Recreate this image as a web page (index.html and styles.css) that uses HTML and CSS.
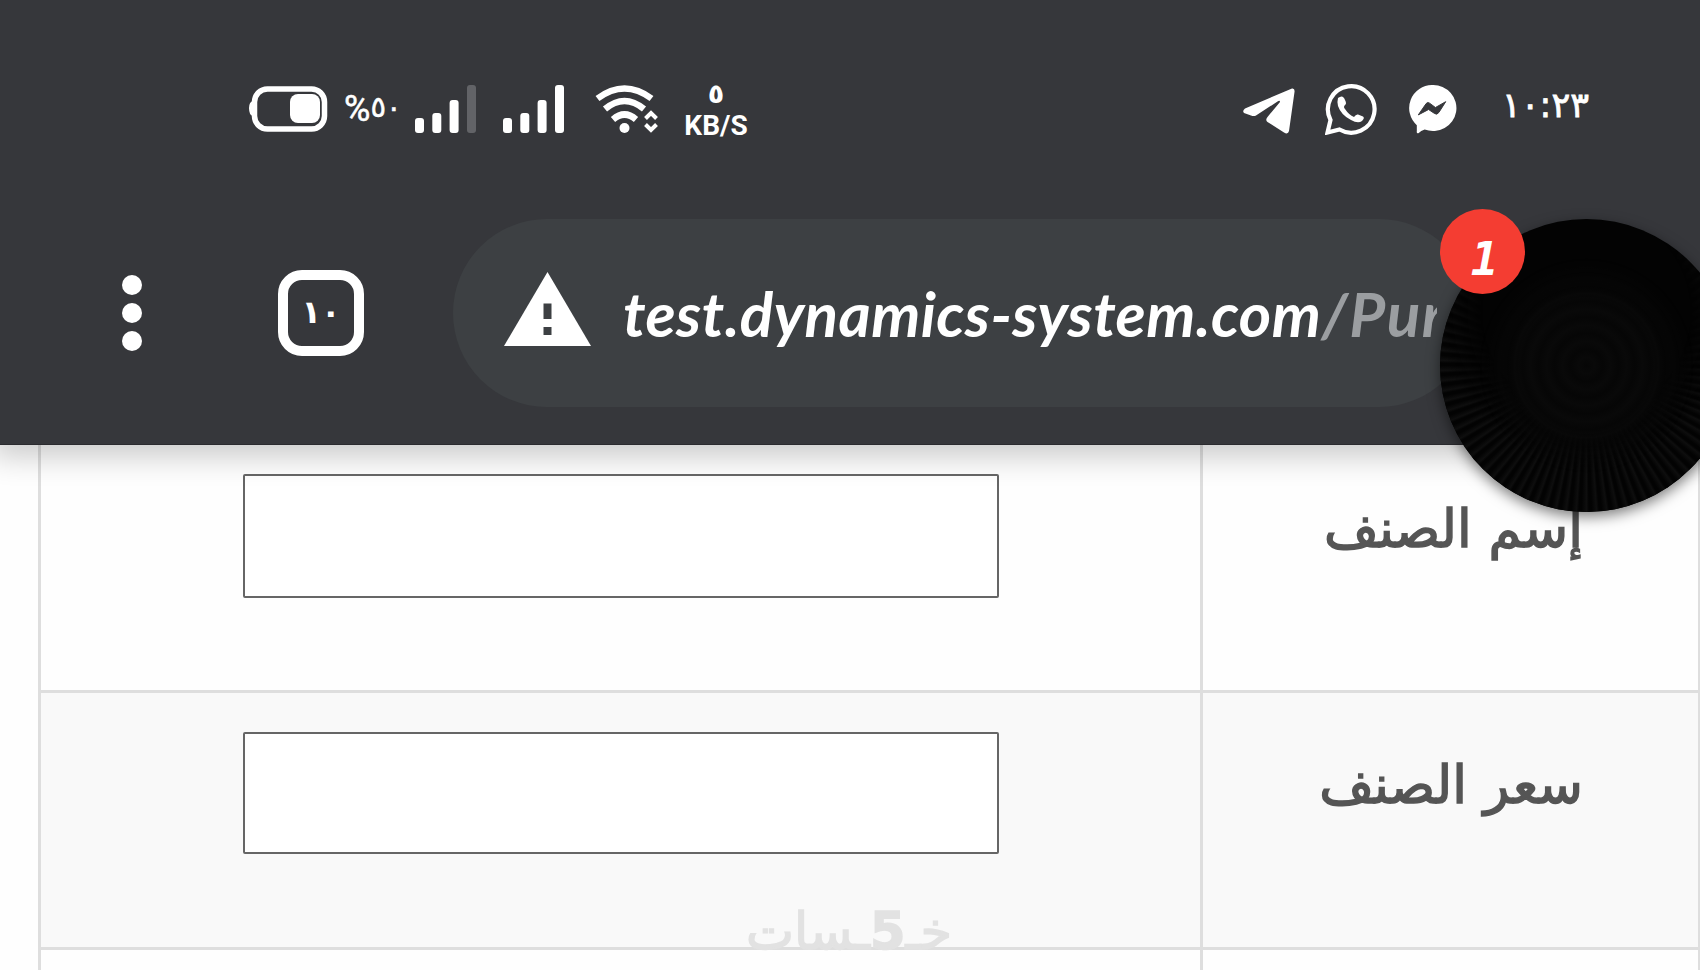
FILE: index.html
```
<!DOCTYPE html>
<html lang="ar">
<head>
  <meta charset="UTF-8" />
  <meta name="viewport" content="width=device-width, initial-scale=1.0" />
  <title>test.dynamics-system.com</title>
  <link rel="stylesheet" href="styles.css">
</head>
<body>

  <header>
    <div class="status-bar">
      <svg class="battery" viewBox="0 0 80 46">
        <path d="M4 15Q0 16 0 22Q0 29 4 30" fill="#fff" />
        <rect x="5.5" y="3" width="70" height="40" rx="13" fill="none" stroke="#fff" stroke-width="5.500" />
        <rect x="41" y="8" width="30" height="29" rx="8" fill="#fff" />
      </svg>
      <span class="percent">%<span class="digits">٥٠</span></span>
      <svg class="signal" viewBox="0 0 62 48">
        <rect x="0" y="33" width="9" height="15" rx="3" />
        <rect x="17.300" y="28" width="9" height="20" rx="3" />
        <rect x="34.600" y="15" width="9" height="33" rx="3" />
        <rect class="off" x="52" y="0" width="9" height="48" rx="3" />
      </svg>
      <svg class="signal second" viewBox="0 0 62 48">
        <rect x="0" y="33" width="9" height="15" rx="3" />
        <rect x="17.300" y="28" width="9" height="20" rx="3" />
        <rect x="34.600" y="15" width="9" height="33" rx="3" />
        <rect x="52" y="0" width="9" height="48" rx="3" />
      </svg>
      <svg class="wifi" viewBox="0 0 64 49">
        <g fill="none" stroke="#fff" stroke-width="6.500">
          <path d="M2.500 13.500Q29.500 -6.500 56.500 13.500" />
          <path d="M10 24Q29.500 8 49 24" />
          <path d="M18 34.500Q29.500 24.500 41 34.500" />
        </g>
        <circle cx="29.500" cy="43" r="5" fill="#fff" />
        <g fill="none" stroke="#fff" stroke-width="4">
          <path d="M50.500 33.500L56 28L61.500 33.500" />
          <path d="M50.500 39.500L56 45L61.500 39.500" />
        </g>
      </svg>
      <div class="speed">
        <span class="digits">٥</span>
        <span class="unit">KB/S</span>
      </div>

      <svg class="telegram" viewBox="0 0 52 46">
        <path d="M49 .500Q52 0 51.500 4L46 43Q45 47 41 44.500L24.500 34Q22 32 24.500 29L37 14Q37 12 34.500 13.500L13 27.500Q11 28.500 8 27.500L1 25Q-1 23 2 20.500Z" fill="#fff" />
      </svg>
      <svg class="whatsapp" viewBox="0 0 52 52">
        <path d="M2.500 49.500L5.500 37A23.300 23.300 0 1 1 14.500 46.500Z" fill="none" stroke="#fff" stroke-width="4.200" />
        <path d="M13 15Q18 11 20 17Q22 21 20 22Q18 24 20 26Q24 32 29 34Q31 31 33 31.500L38 33.500Q40 35 37 38Q33 41 26 37Q16 32 13 23Q12 18 13 15Z" fill="#fff" />
      </svg>
      <svg class="messenger" viewBox="0 0 50 50">
        <path d="M25 0A24 23.500 0 1 1 17 45.500Q13 47 11 49Q8.500 50 9 47L9 41A23.500 23.500 0 0 1 25 0Z" fill="#fff" />
        <path d="M10.500 30.500L18.500 19Q20 17 22 18.500L28 23L38.500 17L31.500 28Q29.500 31 27 29L21 25Z" fill="#36373b" stroke="#36373b" stroke-linejoin="round" />
      </svg>
      <span class="clock">١٠:٢٣</span>
    </div>

    <div class="toolbar">
      <div class="menu">
        <span></span>
        <span></span>
        <span></span>
      </div>
      <div class="tabs">١٠</div>
      <div class="address">
        <svg class="warning" viewBox="0 0 87 74">
          <path d="M43.500 0L87 74H0Z" fill="#fff" />
          <path d="M39.500 31.500H47.500V47H39.500ZM39.500 55H47.500V63H39.500Z" fill="#3d4043" />
        </svg>
        <div class="url">test.dynamics-system.com<span>/Pur</span></div>
      </div>
    </div>
  </header>

  <main>
    <div class="row">
      <div class="field"><input type="text" /></div>
      <div class="label">إسم الصنف</div>
    </div>
    <div class="row alt">
      <div class="field"><input type="text" /></div>
      <div class="label">سعر الصنف</div>
    </div>
    <div class="row last">
      <div class="field"></div>
      <div class="label"></div>
    </div>
  </main>

  <div class="watermark" dir="rtl">خـ<b>5</b>ـسات</div>

  <div class="bubble"></div>
  <div class="badge">1</div>

</body>
</html>
```

FILE: styles.css
```
* {
  box-sizing: border-box;
}
body {
  font-family: "DejaVu Sans", sans-serif;
  background-color: #fefefe;
  margin: 0;
  width: 1700px;
  height: 970px;
  overflow: hidden;
  position: relative;
}
svg {
  display: block;
  flex-shrink: 0;
}
header {
  height: 445px;
  background-color: #36373b;
  border-bottom: 1px solid #2b2b2f;
  box-shadow: 0 4px 28px 8px rgba(0, 0, 0, 0.2);
  position: relative;
  color: #fff;
}
.status-bar {
  height: 219px;
  padding: 83px 0 0 249px;
  display: flex;
  align-items: flex-start;
  white-space: nowrap;
}
.battery {
  width: 80px;
  height: 46px;
  margin-top: 3px;
}
.percent {
  width: 86px;
  padding-left: 15px;
  font-family: Roboto, sans-serif;
  font-size: 36px;
  line-height: 53px;
  -webkit-text-stroke: 0.5px #fff;
}
.percent .digits {
  font-family: "DejaVu Sans", sans-serif;
  font-size: 29px;
  vertical-align: 4px;
  line-height: 1;
}
.signal {
  width: 62px;
  height: 48px;
  margin-top: 2px;
  fill: #fff;
}
.signal .off {
  fill: #626367;
}
.signal.second {
  margin-left: 26px;
}
.wifi {
  width: 64px;
  height: 49px;
  margin: 2px 0 0 30px;
}
.speed {
  width: 66px;
  margin-left: 24px;
  display: flex;
  flex-direction: column;
  align-items: center;
}
.speed .digits {
  font-size: 27px;
  line-height: 22px;
  font-weight: bold;
}
.speed .unit {
  font-family: Roboto, sans-serif;
  font-size: 28px;
  line-height: 33px;
  margin-top: 4px;
  font-weight: bold;
}
.telegram {
  width: 52px;
  height: 46px;
  margin: 5px 0 0 494px;
}
.whatsapp {
  width: 52px;
  height: 52px;
  margin-left: 30px;
}
.messenger {
  width: 49px;
  height: 49px;
  margin: 2px 0 0 31px;
}
.clock {
  margin-left: 45px;
  font-size: 35px;
  line-height: 44px;
  -webkit-text-stroke: 0.8px #fff;
}
.toolbar {
  display: flex;
  align-items: center;
  height: 188px;
  padding-left: 122px;
}
.menu {
  display: flex;
  flex-direction: column;
  gap: 8px;
}
.menu span {
  width: 20px;
  height: 20px;
  border-radius: 50%;
  background-color: #fff;
}
.tabs {
  width: 86px;
  height: 86px;
  margin-left: 136px;
  border: 10px solid #fff;
  border-radius: 24px;
  font-size: 32px;
  font-weight: bold;
  line-height: 64px;
  text-align: center;
}
.address {
  display: flex;
  align-items: center;
  width: 1020px;
  height: 188px;
  margin-left: 89px;
  padding-left: 51px;
  border-radius: 94px;
  background-color: #3d4043;
}
.warning {
  width: 87px;
  height: 74px;
  margin-top: -8px;
}
.url {
  width: 814px;
  margin-left: 32px;
  overflow: hidden;
  white-space: nowrap;
  font-family: Lato, sans-serif;
  font-style: italic;
  font-weight: bold;
  font-size: 62px;
  letter-spacing: 0.4px;
  line-height: 90px;
}
.url span {
  color: #9b9ea1;
  letter-spacing: 1.5px;
}
main {
  width: 1662px;
  margin-left: 38px;
  border-left: 3px solid #dedede;
  border-right: 2px solid #dedede;
}
.row {
  display: flex;
  height: 248px;
  border-bottom: 3px solid #dedede;
}
.row.alt {
  height: 257px;
  background-color: #f9f9f9;
}
.row.last {
  height: 20px;
  border-bottom: none;
}
.field {
  width: 1162px;
  padding: 29px 0 0 202px;
  border-right: 3px solid #dedede;
}
.row.alt .field {
  padding-top: 39px;
}
.field input {
  display: block;
  width: 756px;
  height: 124px;
  border: 2px solid #666;
  border-radius: 2px;
  background-color: #fff;
}
.row.alt .field input {
  height: 122px;
}
.label {
  flex-grow: 1;
  padding: 44px 115px 0 0;
  direction: rtl;
  font-size: 53px;
  line-height: 80px;
  color: #555;
  -webkit-text-stroke: 1.5px #555;
  white-space: nowrap;
}
.row.alt .label {
  padding-top: 52px;
}
.watermark {
  position: absolute;
  left: 748px;
  top: 900px;
  width: 204px;
  font-size: 51px;
  line-height: 64px;
  color: #e2e2e2;
  -webkit-text-stroke: 1.5px #e2e2e2;
  white-space: nowrap;
}
.bubble {
  position: absolute;
  left: 1440px;
  top: 219px;
  width: 293px;
  height: 293px;
  border-radius: 50%;
  background-color: #030303;
  box-shadow: 0 5px 14px rgba(0, 0, 0, 0.5);
  overflow: hidden;
}
.bubble::before {
  content: "";
  position: absolute;
  inset: 0;
  background: repeating-conic-gradient(#0e0e0e 0deg, #030303 2deg 3deg, #0e0e0e 4deg);
  -webkit-mask-image: radial-gradient(circle at 50% 32%, transparent 42%, #000 60%);
  mask-image: radial-gradient(circle at 50% 32%, transparent 42%, #000 60%);
}
.bubble::after {
  content: "";
  position: absolute;
  inset: 30px;
  border-radius: 50%;
  background: repeating-radial-gradient(circle, #060606 0, #090909 8px, #060606 16px);
  -webkit-mask-image: radial-gradient(circle, #000 40%, transparent 65%);
  mask-image: radial-gradient(circle, #000 40%, transparent 65%);
}
.badge {
  position: absolute;
  left: 1440px;
  top: 209px;
  width: 85px;
  height: 85px;
  border-radius: 50%;
  background-color: #f43d32;
  color: #fff;
  font-family: "DejaVu Sans Mono", monospace;
  font-size: 46px;
  font-weight: bold;
  font-style: italic;
  line-height: 101px;
  text-align: center;
  padding-left: 4px;
}
```
